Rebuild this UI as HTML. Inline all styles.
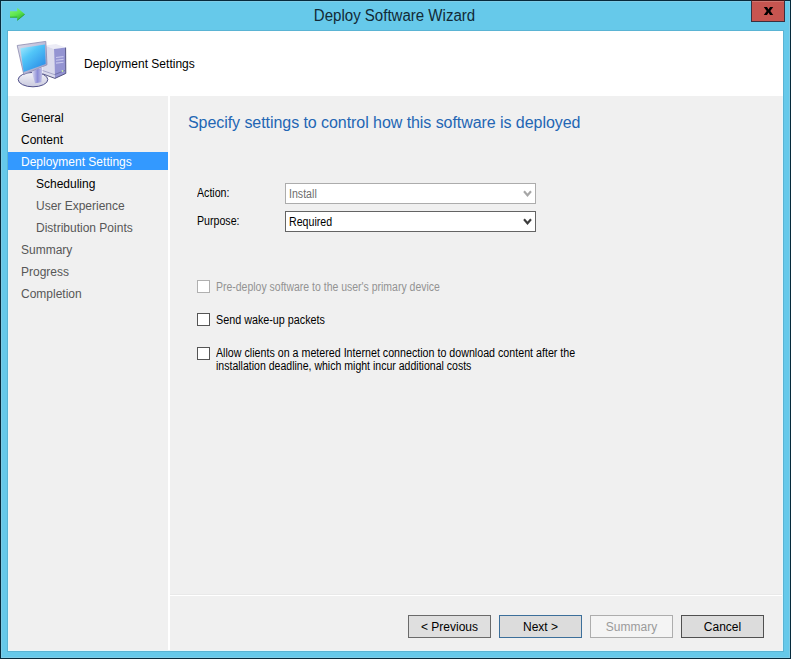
<!DOCTYPE html>
<html><head><meta charset="utf-8">
<style>
*{margin:0;padding:0;box-sizing:border-box}
html,body{width:791px;height:659px;overflow:hidden;background:#0b2b36}
body{position:relative;font-family:"Liberation Sans",sans-serif}
.a{position:absolute}
#frame{left:0;top:0;width:791px;height:659px;background:#66c9ea;border:1px solid #062a3c;box-shadow:inset 0 0 0 1px #80cce6}
#title{left:-1px;top:0px;width:791px;height:31px;text-align:center;font-size:16px;line-height:31px;color:#122a36;transform:scaleX(0.94)}
#close{left:751px;top:0;width:34px;height:22px;background:#c75550;border:1px solid #3a3040;border-top-color:#4a1616;box-shadow:inset 0 1px 0 #cf7670}
#content{left:7px;top:30px;width:777px;height:622px;background:#f0f0f0;border:1px solid #5ab4d4;box-shadow:inset 0 0 0 1px #e6f7fc}
#header{left:8px;top:31px;width:775px;height:65px;background:#fff}
#nav{left:9px;top:96px;width:159px;height:554px;background:#f0f0f0}
#vsep{left:168px;top:96px;width:2px;height:554px;background:#fff}
#hsep{left:170px;top:595px;width:612px;height:1px;background:#fff;box-shadow:0 -1px 0 #e9e9e9}
.nav{position:absolute;left:21px;font-size:12px;white-space:nowrap;color:#575757;height:22px;line-height:22px}
.nav.sub{left:36px}
.nav.done{color:#000}
#sel{left:8px;top:152px;width:160px;height:18px;background:#3399ff}
.lbl{position:absolute;font-size:12px;line-height:14px;white-space:nowrap;color:#000;transform-origin:0 0;transform:scaleX(0.885)}
.combo{position:absolute;left:285px;width:251px;height:21px;background:#fff;border:1px solid #acacac}
.cb{position:absolute;left:197px;width:13px;height:13px;background:#fff;border:1px solid #555}
.btn{position:absolute;top:615px;width:83px;height:23px;background:#dfdfdf;border:1px solid #6a6a6a;font-size:12px;text-align:center;line-height:21px;padding-top:1px;color:#000}
</style></head><body>
<div class="a" id="frame"></div>
<div class="a" id="title">Deploy Software Wizard</div>
<svg class="a" style="left:0;top:0" width="30" height="24" viewBox="0 0 30 24">
  <defs><linearGradient id="ag" x1="0" y1="0" x2="0.6" y2="1">
    <stop offset="0" stop-color="#86f476"/><stop offset="0.55" stop-color="#5ee650"/><stop offset="1" stop-color="#2fb636"/>
  </linearGradient></defs>
  <path d="M10 11.2 H17.2 V7.8 L24.9 14.3 L17.2 20.6 V17.4 H10 Z" fill="url(#ag)"/>
  <path d="M10 17.2 H17.2 M17.2 20.4 L24.6 14.4" stroke="#1f9a2a" stroke-width="0.9" opacity="0.8"/>
</svg>
<div class="a" id="close"></div>
<svg class="a" style="left:760px;top:4px" width="16" height="14" viewBox="760 4 16 14">
  <polygon points="763.8,7 767,7 768.5,9.4 770,7 773.2,7 770.3,11 773.2,15 770,15 768.5,12.6 767,15 763.8,15 766.7,11" fill="#000"/>
</svg>
<div class="a" id="content"></div>
<div class="a" id="header"></div>
<div class="a" id="nav"></div>
<div class="a" id="vsep"></div>
<div class="a" id="hsep"></div>

<svg class="a" style="left:12px;top:36px" width="60" height="60" viewBox="12 36 60 60">
  <defs>
    <linearGradient id="scr" x1="0" y1="0" x2="0.8" y2="1">
      <stop offset="0" stop-color="#aeeefe"/><stop offset="0.4" stop-color="#52c6f8"/><stop offset="1" stop-color="#2a8ae6"/>
    </linearGradient>
    <linearGradient id="neck" x1="0" y1="0" x2="1" y2="0">
      <stop offset="0" stop-color="#e4e4f4"/><stop offset="0.55" stop-color="#8c8cd6"/><stop offset="1" stop-color="#c4c4e6"/>
    </linearGradient>
    <linearGradient id="bez" x1="0" y1="0" x2="1" y2="1">
      <stop offset="0" stop-color="#dcdcea"/><stop offset="1" stop-color="#9c9cc8"/>
    </linearGradient>
    <linearGradient id="base" x1="0" y1="0" x2="0" y2="1">
      <stop offset="0" stop-color="#f2f2f8"/><stop offset="1" stop-color="#cacade"/>
    </linearGradient>
  </defs>
  <polygon points="45,45.5 56,44 65.6,47.6 54,49" fill="#ececf6"/>
  <polygon points="45,45.5 54,49 55,78.4 42.5,73.8" fill="#dadaec"/>
  <polygon points="54,49 65.6,47.6 65.8,73.4 55,78.4" fill="#9494d2"/>
  <polyline points="65.6,47.6 65.8,73.4 55,78.4 42.5,73.8" fill="none" stroke="#4a4a78" stroke-width="0.9"/>
  <line x1="42.5" y1="70.5" x2="54.5" y2="74.6" stroke="#9a9ac0" stroke-width="0.8"/>
  <line x1="54.5" y1="74.6" x2="65.8" y2="70.2" stroke="#6a6aa0" stroke-width="0.8"/>
  <g stroke="#c8c8ee" stroke-width="1.1"><line x1="56" y1="57.5" x2="63.5" y2="56.6"/><line x1="56" y1="60.3" x2="63.5" y2="59.4"/><line x1="56" y1="63.1" x2="63.5" y2="62.2"/></g>
  <circle cx="62.5" cy="71" r="0.9" fill="#c8f0a0"/>
  <ellipse cx="33" cy="79.6" rx="14.8" ry="7.2" fill="url(#base)" stroke="#50508a" stroke-width="1"/>
  <polygon points="31.5,71 42.5,67.5 41.5,82.2 35,83.2" fill="url(#neck)"/>
  <polygon points="17.2,45.5 45.8,41.4 47,64.8 23.8,74.5" fill="url(#bez)" stroke="#8a8ab0" stroke-width="0.8"/>
  <polygon points="20.4,48.3 44.9,44.5 45.7,63.9 23.6,71.9" fill="url(#scr)"/>
</svg>
<div class="a" style="left:84px;top:57px;font-size:12px;white-space:nowrap;color:#000">Deployment Settings</div>

<div class="a" id="sel"></div>
<div class="nav done" style="top:107px">General</div>
<div class="nav done" style="top:129px">Content</div>
<div class="nav" style="top:151px;color:#fff">Deployment Settings</div>
<div class="nav sub done" style="top:173px">Scheduling</div>
<div class="nav sub" style="top:195px">User Experience</div>
<div class="nav sub" style="top:217px">Distribution Points</div>
<div class="nav" style="top:239px">Summary</div>
<div class="nav" style="top:261px">Progress</div>
<div class="nav" style="top:283px">Completion</div>

<div class="a" style="left:188px;top:114px;font-size:16px;letter-spacing:-0.06px;white-space:nowrap;color:#2366b4">Specify settings to control how this software is deployed</div>

<div class="lbl" style="left:197px;top:186px">Action:</div>
<div class="combo" style="top:183px"></div>
<div class="lbl" style="left:289px;top:187px;color:#6d6d6d">Install</div>
<div class="lbl" style="left:197px;top:214px">Purpose:</div>
<div class="combo" style="top:211px;border-color:#646464"></div>
<div class="lbl" style="left:289px;top:215px">Required</div>
<svg class="a" style="left:520px;top:186px" width="14" height="42" viewBox="520 186 14 42">
  <path d="M524 191.3 L527.5 195.3 L531 191.3" fill="none" stroke="#a6a6a6" stroke-width="2.1"/>
  <path d="M524 219.3 L527.5 223.3 L531 219.3" fill="none" stroke="#3c3c3c" stroke-width="2.1"/>
</svg>

<div class="cb" style="top:280px;border-color:#b0b0b0"></div>
<div class="lbl" style="left:216px;top:280px;color:#939393;transform:scaleX(0.873)">Pre-deploy software to the user's primary device</div>
<div class="cb" style="top:313px"></div>
<div class="lbl" style="left:216px;top:313px;transform:scaleX(0.897)">Send wake-up packets</div>
<div class="cb" style="top:347px"></div>
<div class="lbl" style="left:216px;top:346px;transform:scaleX(0.89)">Allow clients on a metered Internet connection to download content after the</div>
<div class="lbl" style="left:216px;top:359px;transform:scaleX(0.878)">installation deadline, which might incur additional costs</div>

<div class="btn" style="left:408px">&lt; Previous</div>
<div class="btn" style="left:499px;border-color:#3c6f9a;background:#dcdcdc">Next &gt;</div>
<div class="btn" style="left:590px;background:#f4f4f4;border-color:#adadad;color:#9a9a9a">Summary</div>
<div class="btn" style="left:681px;border-color:#505050;background:#dcdcdc">Cancel</div>
</body></html>
